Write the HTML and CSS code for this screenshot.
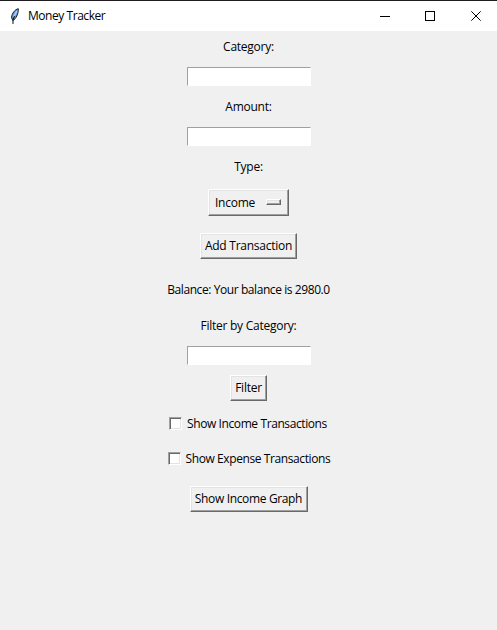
FILE: index.html
```html
<!DOCTYPE html>
<html lang="en">
<head>
<meta charset="utf-8">
<title>Money Tracker</title>
<link rel="stylesheet" href="styles.css">
</head>
<body>
<header class="titlebar">
  <svg class="feather" width="10" height="17" viewBox="0 0 10 17"><path d="M8.300.7C5 1.500 2 5 1.500 9.500L2.800 12.500C6 11 8.500 6 8.300.7Z" fill="#5e94d2" stroke="#18202c" stroke-width="1"/><path d="M7 3 3.500 9" stroke="#a9cdf5" stroke-width="1.500"/><path d="M4.500 8 3 12V16" fill="none" stroke="#111" stroke-width="1"/></svg>
  <h1 class="title">Money Tracker</h1>
  <svg class="controls" width="102" height="11" viewBox="0 0 102 11" fill="none" stroke="#000"><path d="M0 5.500H10M45.500.5H54.500V9.500H45.500Z" shape-rendering="crispEdges"/><path d="M91.300.3 100.700 9.700M100.700.3 91.300 9.700"/></svg>
</header>
<main class="form">
  <label class="label category" for="category">Category:</label>
  <input class="entry" id="category">
  <label class="label amount" for="amount">Amount:</label>
  <input class="entry" id="amount">
  <div class="label type">Type:</div>
  <button class="button option"><span class="text">Income</span><span class="indicator"></span></button>
  <button class="button add"><span class="text">Add Transaction</span></button>
  <p class="label balance">Balance: Your balance is 2980.0</p>
  <label class="label filter-label" for="filter">Filter by Category:</label>
  <input class="entry" id="filter">
  <button class="button filter"><span class="text">Filter</span></button>
  <label class="check income"><input class="box" type="checkbox"><span class="text">Show Income Transactions</span></label>
  <label class="check expense"><input class="box" type="checkbox"><span class="text">Show Expense Transactions</span></label>
  <button class="button graph"><span class="text">Show Income Graph</span></button>
</main>
</body>
</html>
```
FILE: styles.css
```css
* { box-sizing: border-box; }
body {
  margin: 0;
  height: 630px;
  overflow: hidden;
  background: #f0f0f0;
  color: #000;
  font: 12px/20px "Open Sans", "Noto Sans", sans-serif;
}
.titlebar {
  display: flex;
  align-items: center;
  height: 31px;
  padding: 0 15px 0 10px;
  border-top: 1px solid #1f1b20;
  background: #fff;
}
.title {
  margin: 0 0 0 8px;
  font-size: 12px;
  font-weight: 400;
  letter-spacing: -0.45px;
}
.controls { margin-left: auto; }
.form {
  display: flex;
  flex-direction: column;
  align-items: center;
  padding: 6px 0 0;
}
.label, .text { margin: 0; white-space: nowrap; letter-spacing: -0.25px; }
.entry {
  width: 124px;
  height: 19px;
  margin: 10px 0;
  padding: 0 2px;
  border: 1px solid #fff;
  border-top-color: #a0a0a0;
  border-left-color: #a0a0a0;
  border-radius: 0;
  background: #fff;
  outline: none;
}
.amount { margin-top: 1px; }
.type { margin-top: 1px; }
.button {
  display: flex;
  align-items: center;
  justify-content: center;
  height: 26px;
  padding: 0;
  border: 1px solid;
  border-color: #fff #696969 #696969 #fff;
  border-radius: 0;
  background: #f0f0f0;
  color: #000;
  font: inherit;
  box-shadow: inset -1px -1px #a0a0a0, inset 1px 1px #e3e3e3;
}
.option {
  width: 81px;
  height: 27px;
  margin-top: 12px;
  justify-content: space-between;
  padding: 0 7px 0 6px;
}
.indicator {
  width: 15px;
  height: 6px;
  margin-bottom: 2px;
  border: 1px solid;
  border-color: #fff #696969 #696969 #fff;
  box-shadow: inset -1px -1px #a0a0a0, inset 1px 1px #e3e3e3;
}
.add { width: 97px; margin-top: 17px; }
.balance { margin-top: 21px; letter-spacing: -0.42px; }
.filter-label { margin-top: 16px; }
.filter { width: 37px; }
.check { display: flex; align-items: center; gap: 5px; }
.check .text { letter-spacing: -0.4px; }
.income { width: 159px; margin-top: 13px; }
.expense { width: 162px; margin-top: 15px; }
.box {
  appearance: none;
  flex: none;
  width: 13px;
  height: 13px;
  margin: 0 0 1px;
  border: 1px solid;
  border-color: #a0a0a0 #fff #fff #a0a0a0;
  background: #fff;
  box-shadow: inset 1px 1px #696969, inset -1px -1px #e3e3e3;
}
.graph { width: 118px; margin-top: 17px; }
.graph .text { letter-spacing: -0.35px; }
```
